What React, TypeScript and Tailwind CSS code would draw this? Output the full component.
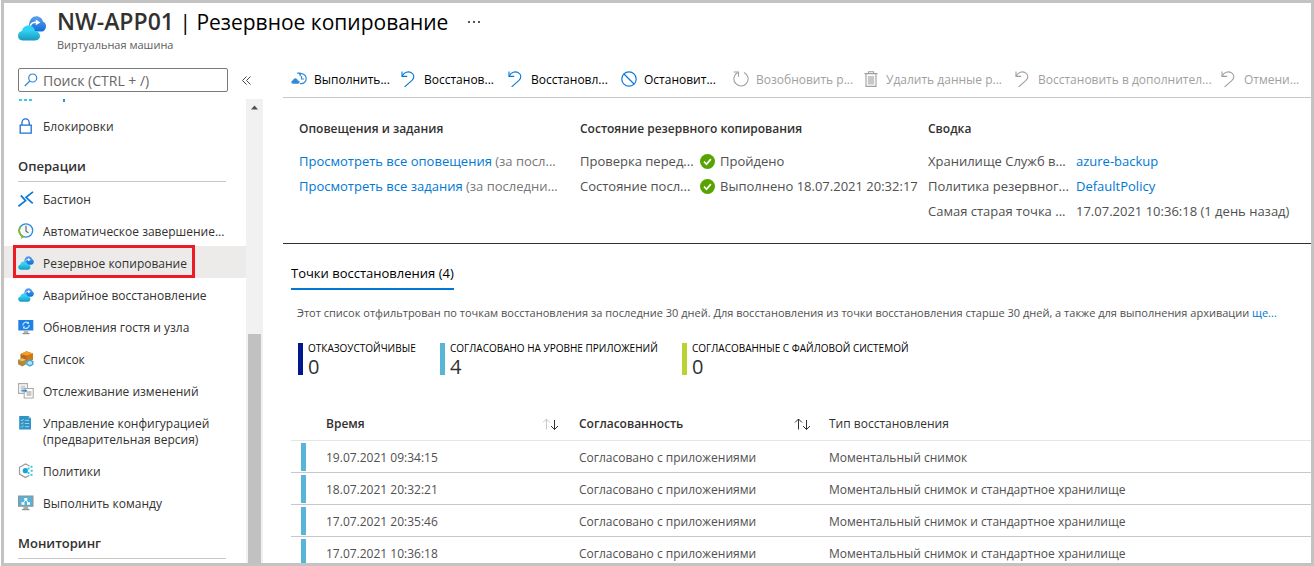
import React from 'react';
import clsx from 'clsx';

const CloudIcon = ({ className }: { className: string }) => (
  <svg viewBox="0 0 28 25" className={className}>
    <defs>
      <linearGradient id="cloudBack" x1="0" y1="0" x2="0" y2="1">
        <stop offset="0" stopColor="#5ea0ef" />
        <stop offset="1" stopColor="#0f6fd6" />
      </linearGradient>
      <linearGradient id="cloudFront" x1="0" y1="0" x2="0" y2="1">
        <stop offset="0.3" stopColor="#32d4f5" />
        <stop offset="1" stopColor="#1b97c0" />
      </linearGradient>
    </defs>
    <path d="M12.5 15.500a6 6 0 0 1-1.400-6.800C11.500 3.400 14.500.3 18.300.3c3.500 0 6 2.300 6.700 5.400 2 .5 3 2.400 3 4.500 0 3-2 5.300-4.800 5.300z" fill="url(#cloudBack)" />
    <path d="M12.300 9.800c.8-2.400 3-3.700 6-3.500" fill="none" stroke="#fff" strokeWidth="1.500" />
    <path d="M17.800 3.600l4.600 2.900-4.600 2.800z" fill="#fff" />
    <path d="M4.700 24.500C2 24.500 0 22.400 0 19.800c0-2.500 1.700-4.300 4-4.700.5-3.200 3-5.500 6.400-5.500 3.300 0 5.900 2.100 6.600 5.300 2.900.2 5 2.200 5 4.900 0 2.700-2.100 4.700-4.800 4.700z" fill="url(#cloudFront)" />
  </svg>
);

const LockIcon = () => (
  <svg viewBox="0 0 16 16" className="size-4" fill="none" stroke="#1b6ed8" strokeWidth="1.300">
    <path d="M2.200 7.100h11v8h-11z" />
    <path d="M4 7V4.500a3.600 3.600 0 0 1 7.200 0V7" />
  </svg>
);

const BastionIcon = () => (
  <svg viewBox="0 0 16 16" className="size-4" fill="none" stroke="#0f78d4" strokeWidth="1.700">
    <path d="M.4 15.200l7.200-5.500L2.800 4.400" />
    <path d="M15 .8L8 6.300l6.700 6" />
  </svg>
);

const ClockIcon = () => (
  <svg viewBox="0 0 16 16" className="size-4" fill="none">
    <circle cx="8" cy="7.500" r="6.700" fill="#f3f8fc" stroke="#2f8ad8" strokeWidth="1.300" />
    <path d="M2.500 3.500A6.800 6.800 0 0 0 5.500 14" stroke="#7fba2c" strokeWidth="1.800" />
    <path d="M3.500 11.500l3 2.600-3.500 1.700z" fill="#7fba2c" />
    <path d="M8 2.800v5.400l2.400 1.600" stroke="#666" strokeWidth="1.200" />
  </svg>
);

const UpdateIcon = () => (
  <svg viewBox="0 0 16 16" className="size-4" fill="none">
    <path d="M.3 1h15v10.500H.3z" fill="#1f80e6" />
    <path d="M6 11.500h4l.6 3H5.400z" fill="#b8b8b8" />
    <path d="M4.500 14h7v1.200h-7z" fill="#8f8f8f" />
    <path d="M4.800 6.500a3.200 3.200 0 0 1 5.500-2.300M11.200 6a3.200 3.200 0 0 1-5.500 2.400" stroke="#bfe9ff" strokeWidth="1.200" />
    <path d="M11 2.600v2.500H8.600zM5 10V7.500h2.400z" fill="#bfe9ff" />
  </svg>
);

const InventoryIcon = () => (
  <svg viewBox="0 0 16 16" className="size-4">
    <path d="M2.500 3L8.500.3l6.500 2.200v6.300l-6 2.200-6.500-2.500z" fill="#b96a14" />
    <path d="M2.500 3L8.500.3l6.500 2.200-6.300 2.200z" fill="#f0a030" />
    <path d="M8.700 4.700L15 2.500v6.300L9 11z" fill="#cf7a17" />
    <path d="M0 8.700l4-1.500 4.200 1.600v4.400L4.300 15.500 0 13.200z" fill="#b08a3c" />
    <path d="M0 8.700l4-1.500 4.200 1.600-3.900 1.400z" fill="#e0c27c" />
    <path d="M11.800 8.300l3.700 1.800v3.700l-3.700 1.900-3.600-1.900v-3.700z" fill="#46a8dc" />
    <path d="M11.800 10l2.200 1v2l-2.200 1-2.100-1v-2z" fill="#b5e2f7" />
  </svg>
);

const ChangesIcon = () => (
  <svg viewBox="0 0 16 16" className="size-4">
    <path d="M.6.600h8.800v9.800H.6z" fill="#fff" stroke="#aaa" strokeWidth="1.100" />
    <path d="M2.500 2.500h5v6h-5z" fill="#d0d0d0" />
    <path d="M6.200 5.500h9v9.500h-9z" fill="#fff" stroke="#aaa" strokeWidth="1.100" />
    <path d="M8.500 8h5v5h-5z" fill="#c8c8c8" />
    <path d="M3.500 7.200h3.500V6l2.500 1.800-2.500 1.800V8.400H3.500z" fill="#2a86d8" />
  </svg>
);

const ConfigIcon = () => (
  <svg viewBox="0 0 16 16" className="size-4">
    <path d="M1.200 1h9.500L13 3.300V14.500H1.200z" fill="#2f93c4" />
    <path d="M10.700 1L13 3.300h-2.300z" fill="#a8d8ee" />
    <path d="M3 5l1 1 1.500-2M3 8.200l1 1 1.500-2M3 11.400l1 1 1.500-2M6.800 5.300h4.400M6.800 8.500h4.400M6.800 11.700h4.400" fill="none" stroke="#b5e0f2" strokeWidth=".8" />
  </svg>
);

const PolicyIcon = () => (
  <svg viewBox="0 0 16 16" className="size-4">
    <path d="M11.500 3L7.500.9 1.500 4.300v6.800l6 3.400 4-2.200" fill="none" stroke="#9a9a9a" strokeWidth="1.200" />
    <circle cx="7.300" cy="7.700" r="2.600" fill="#18a5d6" />
    <path d="M9.500 4.500h2v2h-2zM9.500 9h2v2h-2zM12.500 2.800h2v2h-2zM12.700 6.700h2v2h-2zM12.500 10.800h2v2h-2z" fill="#32c8ea" />
  </svg>
);

const CommandIcon = () => (
  <svg viewBox="0 0 16 16" className="size-4">
    <path d="M.6 1.100h14.300v10H.6z" fill="#52b4da" stroke="#8d9497" strokeWidth="1.200" />
    <path d="M5.800 11.500h4l.7 3H5.100z" fill="#aaa" />
    <path d="M4 14h7.500v1.200H4z" fill="#8d9497" />
    <path d="M6.300 3h3v2.500h-3zM3.500 7.200h3v2.500h-3zM9 7.200h3v2.500H9z" fill="#fff" />
    <path d="M7.800 5L5 8M7.800 5L10.500 8" stroke="#fff" />
  </svg>
);

const UndoIcon = () => (
  <svg viewBox="0 0 16 16" className="size-4" fill="none" stroke="currentColor" strokeWidth="1.100">
    <path d="M1 .4v5h5.200" />
    <path d="M1.200 5.200C3.200 1.300 7 .1 10 1.400c3.400 1.600 3.700 5.300 1 8L3.600 15.900" />
  </svg>
);

const BackupNowIcon = () => (
  <svg viewBox="0 0 16 16" className="size-4" fill="none" stroke="#2f8ad8" strokeWidth="1.200">
    <path d="M8 3.200a5 5 0 1 1 .9 9.300" />
    <path d="M6.200 2.200h3v3" />
    <path d="M10.500 5v3h2.500" />
    <path d="M2.200 12.700C.9 12.700.2 11.800.4 10.700c.2-.9.9-1.300 1.700-1.400C2.600 7.500 4.500 6.800 5.900 7.900c.5.4.8 1 .9 1.700 1.300.1 1.900.8 1.800 1.700-.1.900-.7 1.400-1.700 1.400z" fill="#2f8ad8" stroke="none" />
  </svg>
);

const StopIcon = () => (
  <svg viewBox="0 0 16 16" className="size-4" fill="none" stroke="#0f78d4" strokeWidth="1.200">
    <circle cx="8" cy="8" r="7.200" />
    <path d="M3 3l10 10" />
  </svg>
);

const ResumeIcon = () => (
  <svg viewBox="0 0 16 16" className="size-4" fill="none" stroke="currentColor" strokeWidth="1.100">
    <path d="M11 1.400a7.100 7.100 0 1 1-6.400.2" />
    <path d="M.7 1h4.800v4.800" />
  </svg>
);

const TrashIcon = () => (
  <svg viewBox="0 0 16 16" className="size-4" fill="none" stroke="currentColor" strokeWidth="1.100">
    <path d="M1.500 2.600h13M5.500 2.500V.7h5v1.800M3 2.600v12.800h10V2.600" />
    <path d="M4.800 5h6.400v8.600H4.800z" fill="#c8c8c8" stroke="none" />
  </svg>
);

const CheckIcon = () => (
  <svg viewBox="0 0 16 16" className="size-[15px] shrink-0">
    <circle cx="8" cy="8" r="8" fill="#57a300" />
    <path d="M4.300 8.200l2.600 2.700 4.700-5.400" fill="none" stroke="#fff" strokeWidth="1.800" />
  </svg>
);

const SortIcon = ({ dimmed }: { dimmed?: boolean }) => (
  <svg viewBox="0 0 17 12" className="h-3 w-[17px]" fill="none" stroke="#333">
    <path d="M4.500 11.500V1M1 4.500L4.500 1 8 4.500" stroke={dimmed ? '#c8c8c8' : '#333'} />
    <path d="M12.500 2v9.500M9 8l3.500 3.500L16 8" />
  </svg>
);

const menuItems = [
  { label: 'Бастион', icon: <BastionIcon /> },
  { label: 'Автоматическое завершение...', icon: <ClockIcon /> },
  { label: 'Резервное копирование', icon: <CloudIcon className="h-[14px] w-4" />, selected: true },
  { label: 'Аварийное восстановление', icon: <CloudIcon className="h-[14px] w-4" /> },
  { label: 'Обновления гостя и узла', icon: <UpdateIcon /> },
  { label: 'Список', icon: <InventoryIcon /> },
  { label: 'Отслеживание изменений', icon: <ChangesIcon /> },
  { label: 'Управление конфигурацией (предварительная версия)', icon: <ConfigIcon /> },
  { label: 'Политики', icon: <PolicyIcon /> },
  { label: 'Выполнить команду', icon: <CommandIcon /> },
];

const commands = [
  { label: 'Выполнить...', icon: <BackupNowIcon />, width: 'w-[110px]' },
  { label: 'Восстанов...', icon: <UndoIcon />, width: 'w-[107px]' },
  { label: 'Восстановл...', icon: <UndoIcon />, width: 'w-[113px]' },
  { label: 'Остановит...', icon: <StopIcon />, width: 'w-[112px]' },
  { label: 'Возобновить р...', icon: <ResumeIcon />, width: 'w-[130px]', disabled: true },
  { label: 'Удалить данные р...', icon: <TrashIcon />, width: 'w-[152px]', disabled: true },
  { label: 'Восстановить в дополнител...', icon: <UndoIcon />, width: 'w-[206px]', disabled: true },
  { label: 'Отмени...', icon: <UndoIcon />, width: 'w-[85px]', disabled: true },
];

const stats = [
  { label: 'ОТКАЗОУСТОЙЧИВЫЕ', value: 0, color: 'bg-[#00188f]', width: 'w-[142px]' },
  { label: 'СОГЛАСОВАНО НА УРОВНЕ ПРИЛОЖЕНИЙ', value: 4, color: 'bg-[#59b4d9]', width: 'w-[242px]' },
  { label: 'СОГЛАСОВАННЫЕ С ФАЙЛОВОЙ СИСТЕМОЙ', value: 0, color: 'bg-[#b8d432]', width: 'w-[242px]' },
];

const points = [
  { time: '19.07.2021 09:34:15', type: 'Моментальный снимок' },
  { time: '18.07.2021 20:32:21', type: 'Моментальный снимок и стандартное хранилище' },
  { time: '17.07.2021 20:35:46', type: 'Моментальный снимок и стандартное хранилище' },
  { time: '17.07.2021 10:36:18', type: 'Моментальный снимок и стандартное хранилище' },
];

const MenuHeading = ({ children }: { children: React.ReactNode }) => (
  <h2 className="mr-5 ml-[14px] h-[41px] border-b border-[#c8c8c8] pt-4 text-[13px] leading-[18px] font-semibold text-[#323130]">
    {children}
  </h2>
);

const MenuItem = ({ label, icon, selected }: { label: string; icon: React.ReactNode; selected?: boolean }) => (
  <li>
    <a
      href="#"
      className={clsx(
        'relative flex min-h-8 items-start gap-[9px] pt-[10px] pr-2 pb-[6px] pl-[14px] text-[12px] leading-4 text-[#323130]',
        selected && 'bg-[#edebe9]'
      )}
    >
      <span className="-mt-px flex size-4 shrink-0 items-center">{icon}</span>
      <span>{label}</span>
      {selected && (
        <span className="absolute -top-px left-[9px] h-[33px] w-[182px] border-3 border-[#ed1c24]" />
      )}
    </a>
  </li>
);

const Sidebar = () => (
  <aside className="flex w-[259px] shrink-0 flex-col">
    <div className="flex items-center gap-[10px] pt-2 pl-[14px]">
      <label className="flex h-6 w-[210px] items-center gap-[5px] rounded-xs border border-[#7a7a7a] pl-[5px]">
        <svg viewBox="0 0 14 14" className="size-[14px] shrink-0" fill="none" stroke="#2f8ad8" strokeWidth="1.200">
          <circle cx="8.700" cy="5" r="4" />
          <path d="M5.800 8L.8 13" />
        </svg>
        <input
          type="text"
          aria-label="Поиск"
          placeholder="Поиск (CTRL + /)"
          className="w-full min-w-0 pt-[2px] text-[14px] leading-5 text-[#323130] outline-none placeholder:text-[#666]"
        />
      </label>
      <button type="button" aria-label="Свернуть меню" className="p-1">
        <svg viewBox="0 0 9 9" className="size-[9px]" fill="none" stroke="#444">
          <path d="M4.500.5l-4 4 4 4M8.500.5l-4 4 4 4" />
        </svg>
      </button>
    </div>
    <div className="mt-[7px] flex min-h-0 flex-1">
      <nav className="min-w-0 flex-1 overflow-hidden">
        <svg viewBox="0 0 60 10" className="ml-[14px] h-[10px] w-[60px]">
          <path d="M1 0h3v2H1zM6 0h3v2H6zM11 0h3v2h-3z" fill="#3ccbf0" />
          <path d="M45 0h2v3h-2z" fill="#3a8fc8" />
        </svg>
        <ul>
          <MenuItem label="Блокировки" icon={<LockIcon />} />
        </ul>
        <MenuHeading>Операции</MenuHeading>
        <ul>
          {menuItems.map((item) => (
            <MenuItem key={item.label} {...item} />
          ))}
        </ul>
        <MenuHeading>Мониторинг</MenuHeading>
      </nav>
      <div className="flex w-[17px] flex-col items-center bg-[#f1f1f1]">
        <svg viewBox="0 0 17 17" className="size-[17px]">
          <path d="M5 10.500L8.500 6.500l3.500 4z" fill="#505050" />
        </svg>
        <div className="mt-[218px] w-[13px] flex-1 bg-[#c1c1c1]" />
      </div>
    </div>
  </aside>
);

const Summary = () => (
  <section className="flex h-[146px] border-b border-[#323130] pt-[21px] pl-4 text-[13px] leading-[25px] text-[#505050]">
    <div className="w-[281px] shrink-0">
      <h3 className="mb-[10px] text-[12px] leading-5 font-semibold text-[#323130]">Оповещения и задания</h3>
      <p className="w-[262px] text-[#777]">
        <a href="#" className="text-[#0078d4]">Просмотреть все оповещения</a> (за посл...
      </p>
      <p className="w-[262px] text-[#777]">
        <a href="#" className="text-[#0078d4]">Просмотреть все задания</a> (за последни...
      </p>
    </div>
    <div className="w-[348px] shrink-0">
      <h3 className="mb-[10px] text-[12px] leading-5 font-semibold text-[#323130]">Состояние резервного копирования</h3>
      <dl className="grid grid-cols-[120px_1fr] whitespace-nowrap">
        <dt>Проверка перед...</dt>
        <dd className="flex items-center gap-[5px]"><CheckIcon />Пройдено</dd>
        <dt>Состояние посл...</dt>
        <dd className="flex items-center gap-[5px]"><CheckIcon />Выполнено 18.07.2021 20:32:17</dd>
      </dl>
    </div>
    <div className="min-w-0 flex-1">
      <h3 className="mb-[10px] text-[12px] leading-5 font-semibold text-[#323130]">Сводка</h3>
      <dl className="grid grid-cols-[148px_1fr] whitespace-nowrap">
        <dt>Хранилище Служб в...</dt>
        <dd><a href="#" className="text-[#0078d4]">azure-backup</a></dd>
        <dt>Политика резервног...</dt>
        <dd><a href="#" className="text-[#0078d4]">DefaultPolicy</a></dd>
        <dt>Самая старая точка ...</dt>
        <dd>17.07.2021 10:36:18 (1 день назад)</dd>
      </dl>
    </div>
  </section>
);

const RestorePoints = () => (
  <section className="pl-2">
    <div role="tablist" className="pt-4">
      <button
        type="button"
        role="tab"
        aria-selected="true"
        className="h-[27px] border-b-2 border-[#0078d4] pb-[5px] text-[13px] leading-5 text-black"
      >
        Точки восстановления (4)
      </button>
    </div>
    <p className="mt-[13px] pl-[6px] text-[11px] leading-5 whitespace-nowrap text-[#505050]">
      Этот список отфильтрован по точкам восстановления за последние 30 дней. Для восстановления из точки
      восстановления старше 30 дней, а также для выполнения архивации{' '}
      <a href="#" className="text-[#0078d4]">ще...</a>
    </p>
    <div className="mt-5 flex pl-[7px]">
      {stats.map((stat) => (
        <div key={stat.label} className={clsx('flex h-8 gap-[5px]', stat.width)}>
          <span className={clsx('w-[5px] shrink-0', stat.color)} />
          <div className="whitespace-nowrap">
            <div className="text-[10px] leading-[10px] text-black">{stat.label}</div>
            <div className="text-[20px] leading-7 text-[#323130]">{stat.value}</div>
          </div>
        </div>
      ))}
    </div>
    <table className="mt-8 w-full table-fixed border-collapse text-left text-[12px] text-[#505050]">
      <thead>
        <tr className="h-[33px] border-b border-[#e5e5e5] text-[#323130]">
          <th className="w-[35px]" />
          <th className="w-[253px] pt-[2px] font-semibold">
            <div className="flex items-center justify-between pr-5">Время<SortIcon dimmed /></div>
          </th>
          <th className="w-[250px] pt-[2px] font-semibold">
            <div className="flex items-center justify-between pr-[18px]">Согласованность<SortIcon /></div>
          </th>
          <th className="pt-[2px] font-medium">Тип восстановления</th>
        </tr>
      </thead>
      <tbody>
        {points.map((point) => (
          <tr key={point.time} className="h-8 border-b border-[#c8c8c8]">
            <td className="p-0 pt-px pl-[10px]">
              <div className="h-7 w-[5px] bg-[#59b4d9]" />
            </td>
            <td className="pt-[3px]">{point.time}</td>
            <td className="pt-[3px]">Согласовано с приложениями</td>
            <td className="pt-[3px]">{point.type}</td>
          </tr>
        ))}
      </tbody>
    </table>
  </section>
);

const App = () => {
  return (
    <div className="h-screen bg-white pl-px font-['Open_Sans','Noto_Sans',sans-serif]">
      <div className="flex h-full flex-col overflow-hidden border-3 border-[#c3c3c3]">
        <header className="flex h-[57px] shrink-0 pt-[13px] pl-[14px]">
          <CloudIcon className="h-[25px] w-7 shrink-0" />
          <div className="-mt-[9px] ml-[11px]">
            <div className="flex items-center">
              <h1 className="text-[21px] leading-7 text-black">
                <span className="text-[23px] font-semibold text-[#323130]">NW-APP01</span> | Резервное копирование
              </h1>
              <button type="button" aria-label="Дополнительно" className="ml-[19px] flex gap-[3px] p-px">
                <span className="size-[2px] bg-[#555]" />
                <span className="size-[2px] bg-[#555]" />
                <span className="size-[2px] bg-[#555]" />
              </button>
            </div>
            <p className="mt-px text-[11px] leading-4 text-[#605e5c]">Виртуальная машина</p>
          </div>
        </header>
        <div className="flex min-h-0 flex-1">
          <Sidebar />
          <main className="ml-5 min-w-0 flex-1 overflow-hidden">
            <div className="flex h-[38px] items-center border-b border-[#c8c8c8] pl-2">
              {commands.map((command, index) => (
                <button
                  key={index}
                  type="button"
                  disabled={command.disabled}
                  className={clsx(
                    'flex shrink-0 items-center gap-[7px] text-[12px] whitespace-nowrap',
                    command.width,
                    command.disabled ? 'text-[#a19f9d]' : 'text-[#0078d4]'
                  )}
                >
                  {command.icon}
                  <span className={clsx('pt-[2px]', command.disabled ? 'text-[#a19f9d]' : 'text-black')}>
                    {command.label}
                  </span>
                </button>
              ))}
            </div>
            <Summary />
            <RestorePoints />
          </main>
        </div>
      </div>
    </div>
  );
};

export default App;
